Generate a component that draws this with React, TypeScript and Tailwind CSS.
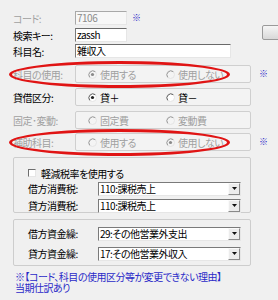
import React from 'react';

const LABEL = 'w-[62px] shrink-0 whitespace-nowrap';
const GRAY = 'text-[#a0a0a0]';
const NOTE = 'text-[#2a2ac8]';

function Radio({ checked, disabled, label }: { checked?: boolean; disabled?: boolean; label: string }) {
  return (
    <span className="flex w-[78px] items-center gap-[3px]">
      <svg width="9" height="9" viewBox="0 0 9 9" className="shrink-0">
        <circle cx="4.5" cy="4.5" r="4" fill={disabled ? '#f4f4f4' : '#ffffff'} stroke="#e4e4e4" />
        <path d="M1.7 7.3 A4 4 0 0 1 7.3 1.7" stroke={disabled ? '#9a9a9a' : '#606060'} fill="none" />
        {checked && <circle cx="4.5" cy="4.5" r="1.6" fill={disabled ? '#8a8a8a' : '#202020'} />}
      </svg>
      <span className={`whitespace-nowrap ${disabled ? GRAY : 'text-black'}`}>{label}</span>
    </span>
  );
}

function RadioRow({
  label,
  disabled,
  options,
  mark,
  className,
}: {
  label: string;
  disabled?: boolean;
  options: { label: string; checked?: boolean }[];
  mark?: boolean;
  className?: string;
}) {
  return (
    <div className={`flex h-[18px] items-center ${className ?? ''}`}>
      <span className={`${LABEL} ${disabled ? GRAY : 'text-black'}`}>{label}</span>
      <div className="flex h-[18px] w-[176px] items-center rounded-[2px] border border-[#cfcfcf] bg-[#f3f3f3] pl-[12px]">
        {options.map((o) => (
          <Radio key={o.label} label={o.label} checked={o.checked} disabled={disabled} />
        ))}
      </div>
      {mark && <span className={`ml-[8px] text-[9px] ${NOTE}`}>※</span>}
    </div>
  );
}

function Select({ value }: { value: string }) {
  return (
    <div className="flex h-[14px] w-[143px] items-stretch border border-t-[#7a7a7a] border-l-[#7a7a7a] border-r-[#e6e6e6] border-b-[#e6e6e6] bg-white">
      <span className="flex min-w-0 flex-1 items-center whitespace-nowrap pl-[1px] leading-[12px]">{value}</span>
      <span className="flex w-[12px] items-center justify-center border border-t-[#fafafa] border-l-[#fafafa] border-r-[#8a8a8a] border-b-[#8a8a8a] bg-[#ececec]">
        <svg width="5" height="3" viewBox="0 0 5 3">
          <path d="M0 0 H5 L2.5 3 Z" fill="#111" />
        </svg>
      </span>
    </div>
  );
}

function Input({ value, className }: { value: string; className: string }) {
  return (
    <div
      className={`flex h-[14px] items-center border border-t-[#6a6a6a] border-l-[#7a7a7a] border-r-[#e6e6e6] border-b-[#e6e6e6] pl-[1px] leading-[12px] ${className}`}
    >
      {value}
    </div>
  );
}

export default function App() {
  return (
    <div className="relative h-[300px] w-[278px] overflow-hidden bg-[#f0f0f0] font-['Noto_Sans_CJK_JP',sans-serif] text-[10px] tracking-[-0.5px] text-black [font-feature-settings:'palt']">
      <div className="flex flex-col pl-[13px] pt-[11px]">
        <div className="flex h-[14px] items-center">
          <span className={`${LABEL} ${GRAY}`}>コード:</span>
          <Input value="7106" className="w-[52px] bg-[#f7f7f7] text-[#8c8c8c] border-t-[#a8a8a8] border-l-[#a8a8a8]" />
          <span className={`ml-[5px] text-[9px] ${NOTE}`}>※</span>
        </div>

        <div className="mt-[3px] flex h-[14px] items-center">
          <span className={LABEL}>検索キー:</span>
          <Input value="zassh" className="w-[52px] bg-white" />
          <div className="ml-auto -mt-[3px] mr-[-6px] h-[15px] w-[22px] self-start rounded-[2px] border border-[#9a9a9a] bg-gradient-to-b from-[#f6f6f6] to-[#d8d8d8]" />
        </div>

        <div className="mt-[2px] flex h-[14px] items-center">
          <span className={LABEL}>科目名:</span>
          <Input value="雑収入" className="w-[156px] bg-white border-t-[#3c3c3c]" />
        </div>

        <RadioRow
          className="mt-[7px]"
          label="科目の使用:"
          disabled
          mark
          options={[{ label: '使用する', checked: true }, { label: '使用しない' }]}
        />
        <RadioRow
          className="mt-[5px]"
          label="貸借区分:"
          options={[{ label: '貸＋', checked: true }, { label: '貸－' }]}
        />
        <RadioRow
          className="mt-[5px]"
          label="固定･変動:"
          disabled
          options={[{ label: '固定費' }, { label: '変動費' }]}
        />
        <RadioRow
          className="mt-[4px]"
          label="補助科目:"
          disabled
          mark
          options={[{ label: '使用する' }, { label: '使用しない', checked: true }]}
        />

        <div className="mt-[6px] flex h-[56px] w-[238px] flex-col rounded-[2px] border border-[#cdcdcd] pl-[14px] pt-[9px]">
          <div className="flex h-[12px] items-center gap-[5px]">
            <span className="h-[8px] w-[8px] border border-t-[#6e6e6e] border-l-[#6e6e6e] border-r-[#e6e6e6] border-b-[#e6e6e6] bg-white" />
            <span>軽減税率を使用する</span>
          </div>
          <div className="mt-[2px] flex items-center">
            <span className="w-[70px]">借方消費税:</span>
            <Select value="110:課税売上" />
          </div>
          <div className="mt-[2px] flex items-center">
            <span className="w-[70px]">貸方消費税:</span>
            <Select value="110:課税売上" />
          </div>
        </div>

        <div className="mt-[6px] flex h-[47px] w-[238px] flex-col rounded-[2px] border border-[#cdcdcd] pl-[14px] pt-[6px]">
          <div className="flex items-center">
            <span className="w-[70px]">借方資金繰:</span>
            <Select value="29:その他営業外支出" />
          </div>
          <div className="mt-[5px] flex items-center">
            <span className="w-[70px]">貸方資金繰:</span>
            <Select value="17:その他営業外収入" />
          </div>
        </div>

        <div className={`mt-[5px] pl-[2px] leading-[11px] ${NOTE}`}>
          <div className="whitespace-nowrap">※【コード、科目の使用区分等が変更できない理由】</div>
          <div>当期仕訳あり</div>
        </div>
      </div>

      <div className="pointer-events-none absolute left-[9px] top-[61px] h-[27px] w-[221px] rounded-[50%] border-[3px] border-[#e01414]" />
      <div className="pointer-events-none absolute left-[9px] top-[129px] h-[27px] w-[221px] rounded-[50%] border-[3px] border-[#e01414]" />
    </div>
  );
}
